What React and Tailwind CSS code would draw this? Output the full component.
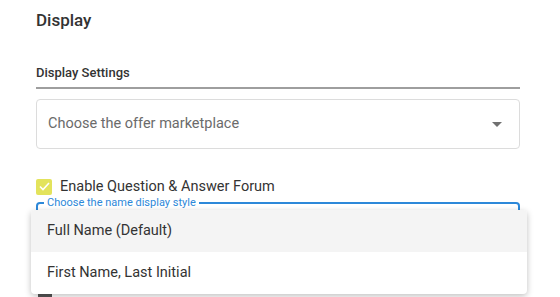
import React from 'react';

const font = { fontFamily: 'Roboto, "Liberation Sans", sans-serif' };

export default function App() {
  return (
    <div className="relative w-[560px] h-[297px] overflow-hidden bg-white text-[#333]" style={font}>
      <div className="px-9 pt-[8px]">
        <h1 className="text-[17px] leading-6 font-medium text-[#333]">Display</h1>

        <div className="mt-[33px] w-[484px]">
          <h2 className="text-[13px] leading-4 font-medium text-[#333] pb-[6px] border-b-2 border-[#9e9e9e]">Display Settings</h2>

          <div className="mt-[10px] h-[50px] rounded border border-[#dcdcdc] flex items-center justify-between pl-[11px] pr-[17px]">
            <span className="text-[14.5px] text-[#6b6b6b]">Choose the offer marketplace</span>
            <svg width="10" height="5" viewBox="0 0 10 5" className="fill-[#707070]">
              <path d="M0 0h10L5 5z" />
            </svg>
          </div>

          <label className="mt-[27px] flex items-center gap-2">
            <span className="w-4 h-4 rounded-[2px] bg-[#e3e35c] flex items-center justify-center">
              <svg width="11" height="9" viewBox="0 0 11 9" fill="none">
                <path d="M1 4.5 4 7.5 10 1" stroke="#fff" strokeWidth="1.6" />
              </svg>
            </span>
            <span className="text-[14.5px] text-[#333]">Enable Question &amp; Answer Forum</span>
          </label>

          <div className="relative mt-[4px] h-[50px] rounded border-2 border-[#2c88d9]">
            <span className="absolute -top-[8px] left-[6px] bg-white px-[3px] text-[11px] leading-[14px] text-[#2c88d9]">
              Choose the name display style
            </span>
          </div>

          <div className="mt-[40px] pl-[2px] flex items-center gap-2">
            <span className="w-[14px] h-[14px] rounded-[2px] bg-[#555]" />
          </div>
        </div>
      </div>

      <ul className="absolute left-[31px] top-[210px] w-[496px] rounded bg-white shadow-[0_2px_6px_rgba(0,0,0,0.25)] overflow-hidden">
        <li className="h-[42px] flex items-center pl-4 bg-[#f4f4f4] text-[14.5px] text-[#333]">Full Name (Default)</li>
        <li className="h-[42px] flex items-center pl-4 text-[14.5px] text-[#333]">First Name, Last Initial</li>
      </ul>
    </div>
  );
}
